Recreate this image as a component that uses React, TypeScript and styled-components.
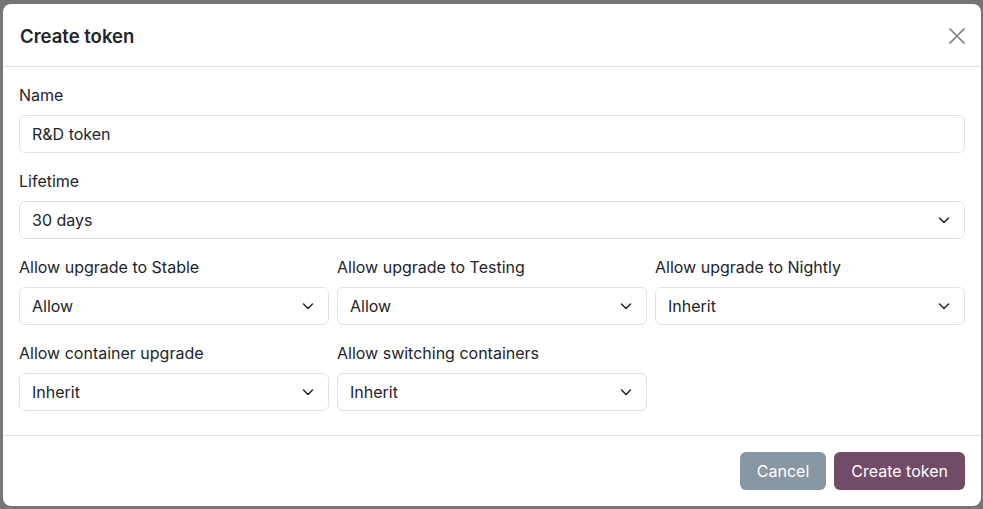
import styled, { createGlobalStyle } from "styled-components";

const GlobalStyle = createGlobalStyle`
  html, body {
    margin: 0;
    background: #767676;
  }
  body {
    font-family: Inter, "Noto Sans", sans-serif;
    color: #212529;
  }
`;

const Backdrop = styled.div`
  padding: 4px 2px 3px 3px;
`;

const Dialog = styled.div`
  width: 978px;
  height: 502px;
  background: #fff;
  border-radius: 8px;
  display: flex;
  flex-direction: column;
  overflow: hidden;
`;

const Header = styled.div`
  height: 63px;
  box-sizing: border-box;
  display: flex;
  align-items: center;
  justify-content: space-between;
  padding: 1px 15px 0 17px;
  border-bottom: 1px solid #dee2e6;
`;

const Title = styled.h4`
  margin: 0;
  font-size: 18.5px;
  font-weight: 600;
  color: #212529;
`;

const CloseButton = styled.button`
  border: none;
  background: none;
  padding: 0;
  width: 18px;
  height: 18px;
  display: flex;
  cursor: pointer;
`;

const Body = styled.div`
  flex: 1;
  padding: 16px 16px 0;
`;

const Field = styled.div`
  display: flex;
  flex-direction: column;
  margin-bottom: 16px;
`;

const Label = styled.label`
  font-size: 16px;
  line-height: 24px;
  margin-bottom: 8px;
  color: #212529;
`;

const Control = styled.div`
  height: 38px;
  box-sizing: border-box;
  border: 1px solid #dee2e6;
  border-radius: 6px;
  padding: 0 12px;
  display: flex;
  align-items: center;
  justify-content: space-between;
  font-size: 16px;
  color: #212529;
`;

const Grid = styled.div`
  display: grid;
  grid-template-columns: repeat(3, 1fr);
  column-gap: 8px;
`;

const Footer = styled.div`
  height: 71px;
  box-sizing: border-box;
  border-top: 1px solid #dee2e6;
  display: flex;
  align-items: center;
  justify-content: flex-end;
  gap: 8px;
  padding: 0 16px;
`;

const Button = styled.button<{ $primary?: boolean }>`
  height: 38px;
  padding: 0 17px;
  border: none;
  border-radius: 6px;
  font-family: inherit;
  font-size: 16px;
  font-weight: 400;
  color: #fff;
  background: ${(p) => (p.$primary ? "#714b67" : "#8797a4")};
  cursor: pointer;
`;

const Chevron = () => (
  <svg width="16" height="16" viewBox="0 0 16 16" fill="none">
    <path d="M3.5 6l4.5 4.5L12.5 6" stroke="#212529" strokeWidth="1.5" strokeLinecap="round" strokeLinejoin="round" />
  </svg>
);

const Select = ({ value }: { value: string }) => (
  <Control>
    <span>{value}</span>
    <Chevron />
  </Control>
);

const upgrades = [
  { label: "Allow upgrade to Stable", value: "Allow" },
  { label: "Allow upgrade to Testing", value: "Allow" },
  { label: "Allow upgrade to Nightly", value: "Inherit" },
  { label: "Allow container upgrade", value: "Inherit" },
  { label: "Allow switching containers", value: "Inherit" },
];

const App = () => {
  return (
    <>
      <GlobalStyle />
      <Backdrop>
        <Dialog>
          <Header>
            <Title>Create token</Title>
            <CloseButton aria-label="Close">
              <svg width="18" height="18" viewBox="0 0 18 18">
                <path d="M1.5 1.5l15 15M16.5 1.5l-15 15" stroke="#7a7a7a" strokeWidth="1.6" />
              </svg>
            </CloseButton>
          </Header>
          <Body>
            <Field>
              <Label>Name</Label>
              <Control>R&amp;D token</Control>
            </Field>
            <Field>
              <Label>Lifetime</Label>
              <Select value="30 days" />
            </Field>
            <Grid>
              {upgrades.map((u) => (
                <Field key={u.label}>
                  <Label>{u.label}</Label>
                  <Select value={u.value} />
                </Field>
              ))}
            </Grid>
          </Body>
          <Footer>
            <Button>Cancel</Button>
            <Button $primary>Create token</Button>
          </Footer>
        </Dialog>
      </Backdrop>
    </>
  );
};

export default App;
